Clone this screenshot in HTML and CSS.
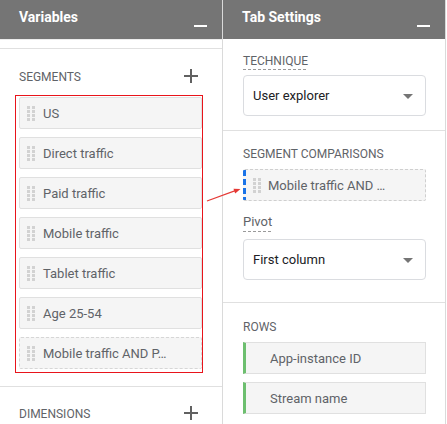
FILE: index.html
```html
<!DOCTYPE html>
<html lang="en">
<head>
<meta charset="utf-8">
<title>Variables and Tab Settings</title>
<link rel="stylesheet" href="styles.css">
</head>
<body>
<svg class="defs" aria-hidden="true">
  <symbol id="grip" viewBox="0 0 8 15">
    <rect x="0" y="0" width="3" height="3"/><rect x="5" y="0" width="3" height="3"/>
    <rect x="0" y="4" width="3" height="3"/><rect x="5" y="4" width="3" height="3"/>
    <rect x="0" y="8" width="3" height="3"/><rect x="5" y="8" width="3" height="3"/>
    <rect x="0" y="12" width="3" height="3"/><rect x="5" y="12" width="3" height="3"/>
  </symbol>
  <symbol id="plus" viewBox="0 0 14 14">
    <rect x="6" y="0" width="2" height="14"/><rect x="0" y="6" width="14" height="2"/>
  </symbol>
</svg>
<div class="app">
  <section class="panel vars">
    <header class="phead"><span class="ptitle">Variables</span><span class="minim"></span></header>
    <div class="subline"></div>
    <div class="sect seg">
      <div class="shead"><span class="label">SEGMENTS</span><svg class="plus"><use href="#plus"/></svg></div>
      <ul class="items">
        <li class="chip"><svg class="grip"><use href="#grip"/></svg><span class="txt">US</span></li>
        <li class="chip"><svg class="grip"><use href="#grip"/></svg><span class="txt">Direct traffic</span></li>
        <li class="chip"><svg class="grip"><use href="#grip"/></svg><span class="txt">Paid traffic</span></li>
        <li class="chip"><svg class="grip"><use href="#grip"/></svg><span class="txt">Mobile traffic</span></li>
        <li class="chip"><svg class="grip"><use href="#grip"/></svg><span class="txt">Tablet traffic</span></li>
        <li class="chip"><svg class="grip"><use href="#grip"/></svg><span class="txt">Age 25-54</span></li>
        <li class="chip dashed"><svg class="grip"><use href="#grip"/></svg><span class="txt">Mobile traffic AND P…</span></li>
      </ul>
    </div>
    <div class="sect dims">
      <div class="shead"><span class="label">DIMENSIONS</span><svg class="plus"><use href="#plus"/></svg></div>
    </div>
    <div class="annot-box"></div>
  </section>

  <section class="panel tabs">
    <header class="phead"><span class="ptitle">Tab Settings</span><span class="minim"></span></header>
    <div class="tsect tech">
      <span class="label dotted">TECHNIQUE</span>
      <div class="select"><span class="val">User explorer</span><span class="caret"></span></div>
    </div>
    <div class="tsect comp">
      <span class="label">SEGMENT COMPARISONS</span>
      <div class="chip cmp"><svg class="grip"><use href="#grip"/></svg><span class="txt">Mobile traffic AND …</span></div>
      <span class="sublabel dotted">Pivot</span>
      <div class="select"><span class="val">First column</span><span class="caret"></span></div>
    </div>
    <div class="tsect rows">
      <span class="label">ROWS</span>
      <div class="rowlist">
        <div class="chip rowchip"><span class="txt">App-instance ID</span></div>
        <div class="chip rowchip"><span class="txt">Stream name</span></div>
      </div>
    </div>
  </section>
</div>
<svg class="arrow" viewBox="0 0 447 424" aria-hidden="true">
  <line x1="207" y1="201" x2="236" y2="190.4" stroke="#e53935" stroke-width="1.2"/>
  <polygon points="240.5,189 235.2,193.4 233.5,188.7" fill="#e53935"/>
</svg>
</body>
</html>
```
FILE: styles.css
```css
* { box-sizing: border-box; margin: 0; padding: 0; }
html, body { width: 447px; height: 424px; overflow: hidden; background: #fff; }
body { font-family: Roboto, "Noto Sans", Arial, sans-serif; position: relative; color: #5f6368; }

.defs { position: absolute; width: 0; height: 0; overflow: hidden; }

.app { display: flex; height: 424px; }

.panel { width: 223px; flex: none; border-right: 1px solid #dadada; position: relative; height: 424px; }

.phead { height: 39px; background: #757575; display: flex; align-items: flex-start; padding: 9px 15px 0 19px; }
.ptitle { font-size: 14px; font-weight: 700; color: #fff; line-height: 17px; }
.minim { margin-left: auto; margin-top: 16px; width: 13px; height: 2px; background: #fff; }

.subline { height: 10px; border-top: 1px solid #ececec; border-bottom: 1px solid #e0e0e0; }

.sect { padding: 21px 20px 17px 19px; }
.dims { border-top: 1px solid #e0e0e0; padding-top: 20px; }
.shead { display: flex; align-items: center; justify-content: space-between; height: 14px; padding-right: 4px; }
.label { font-size: 12px; line-height: 14px; color: #5f6368; letter-spacing: 0; }
.plus { width: 14px; height: 14px; fill: #616161; margin-top: -2px; }

.items { list-style: none; margin-top: 13px; display: flex; flex-direction: column; gap: 8px; }

.chip { height: 32px; border: 1px solid #e0e0e0; background: #f5f5f5; border-radius: 2px; display: flex; align-items: center; padding-left: 7px; gap: 8px; }
.chip.dashed { border-style: dashed; border-color: #d6d6d6; }
.grip { width: 8px; height: 15px; fill: #d2d2d2; flex: none; }
.txt { font-size: 13px; line-height: 15px; color: #5f6368; white-space: nowrap; }

.annot-box { position: absolute; left: 15px; top: 95px; width: 188px; height: 278px; border: 1px solid #e8141b; pointer-events: none; }

/* right panel */
.tsect { display: flex; flex-direction: column; align-items: flex-start; padding: 0 19px 0 20px; border-bottom: 1px solid #e0e0e0; }
.tsect > .select, .tsect > .chip, .tsect > .rowlist { align-self: stretch; }
.tech { padding-top: 15px; padding-bottom: 14px; }
.comp { padding-top: 16px; padding-bottom: 22px; }
.rows { padding-top: 17px; border-bottom: none; }

.dotted { padding-bottom: 3px; background: repeating-linear-gradient(90deg, #9a9a9a 0 3px, transparent 3px 5px) left bottom / 100% 1px no-repeat; }
.label.dotted { padding-bottom: 2px; }
.tech .select { margin-top: 5px; }

.select { height: 41px; border: 1px solid #dadce0; border-radius: 4px; display: flex; align-items: center; justify-content: space-between; padding: 0 12px 0 9px; }
.val { font-size: 13px; line-height: 15px; color: #202124; }
.caret { width: 0; height: 0; border-left: 5px solid transparent; border-right: 5px solid transparent; border-top: 5px solid #757575; margin-top: 2px; }

.comp .label { margin-bottom: 8px; }
.chip.cmp { border: 1px dashed #cfcfcf; border-left: 0; padding-left: 10px; gap: 7px;
  background: repeating-linear-gradient(180deg, #1a73e8 0 6px, transparent 6px 9px) left top / 3px 100% no-repeat, #f5f5f5; }
.sublabel { font-size: 13px; line-height: 15px; color: #5f6368; margin-top: 13px; margin-bottom: 7px; }

.rowlist { margin-top: 8px; display: flex; flex-direction: column; gap: 8px; }
.chip.rowchip { border-radius: 0; border-left: 3px solid #6dbf6f; padding-left: 24px; }

.arrow { position: absolute; left: 0; top: 0; width: 447px; height: 424px; pointer-events: none; }
```
